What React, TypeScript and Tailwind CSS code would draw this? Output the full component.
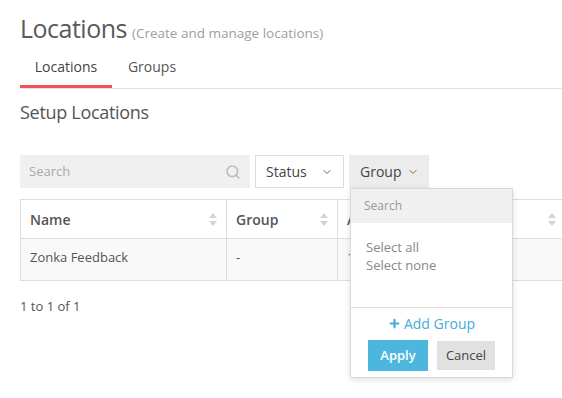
import { Search, ChevronDown, Plus } from "lucide-react";

function SortIcon() {
  return (
    <svg width="8" height="13" viewBox="0 0 8 13" className="shrink-0">
      <path d="M4 0 L8 5 L0 5 Z" fill="#d4d4d4" />
      <path d="M4 13 L8 8 L0 8 Z" fill="#d4d4d4" />
    </svg>
  );
}

function HeaderCell({ label, width }: { label: string; width: string }) {
  return (
    <div className={`${width} flex items-center justify-between border-r border-[#dddddd] px-[9px] last:border-r-0`}>
      <span className="font-semibold text-[14px] text-[#555]">{label}</span>
      <SortIcon />
    </div>
  );
}

export default function App() {
  return (
    <div className="relative w-[562px] h-[398px] overflow-hidden bg-white font-['Open_Sans',sans-serif] text-[#555]">
      <div className="pl-[20px] pt-[11px]">
        {/* title */}
        <div className="flex items-baseline gap-[5px] h-[34px]">
          <h1 className="text-[25px] leading-[34px] text-[#5a5a5a] tracking-[-0.5px]">Locations</h1>
          <span className="text-[13.5px] text-[#a0a0a0]">(Create and manage locations)</span>
        </div>

        {/* tabs */}
        <div className="mt-[7px] flex border-b border-[#e2e2e2]">
          <div className="w-[92px] h-[36px] flex items-start pt-[4px] justify-center border-b-[3px] border-[#ef5059] text-[14px] text-[#444] mb-[-1px]">
            Locations
          </div>
          <div className="w-[80px] h-[36px] flex items-start pt-[4px] justify-center text-[14px] text-[#555]">Groups</div>
        </div>

        <h2 className="mt-[10px] text-[18px] leading-[26px] text-[#555] tracking-[-0.3px]">Setup Locations</h2>

        {/* filters */}
        <div className="mt-[30px] flex gap-[5px] h-[33px]">
          <div className="w-[230px] bg-[#f0f0f0] flex items-center justify-between pl-[9px] pr-[9px]">
            <span className="text-[13px] text-[#aaa]">Search</span>
            <Search size={16} strokeWidth={2.4} className="text-[#bdbdbd]" />
          </div>
          <div className="w-[89px] border border-[#dddddd] flex items-center justify-between pl-[10px] pr-[10px]">
            <span className="text-[14px] text-[#444]">Status</span>
            <ChevronDown size={12} strokeWidth={2} className="text-[#666]" />
          </div>
          <div className="relative w-[80px] bg-[#ececec] flex items-center pl-[11px] gap-[6px]">
            <span className="text-[14px] text-[#444]">Group</span>
            <ChevronDown size={12} strokeWidth={2} className="text-[#666]" />
          </div>
        </div>

        {/* table */}
        <div className="mt-[11px] w-[600px] border border-[#dddddd]">
          <div className="flex h-[39px] border-b border-[#dddddd]">
            <HeaderCell label="Name" width="w-[206px]" />
            <HeaderCell label="Group" width="w-[111px]" />
            <HeaderCell label="Address" width="w-[120px]" />
            <HeaderCell label="Status" width="w-[108px]" />
            <div className="flex-1" />
          </div>
          <div className="flex h-[41px] bg-[#f9f9f9] text-[13px] leading-[18px] text-[#555]">
            <div className="w-[206px] border-r border-[#dddddd] px-[9px] pt-[9px]">Zonka Feedback</div>
            <div className="w-[111px] border-r border-[#dddddd] px-[9px] pt-[9px]">-</div>
            <div className="w-[120px] border-r border-[#dddddd] px-[9px] pt-[9px]">1</div>
            <div className="w-[108px] px-[9px] pt-[9px]">Active</div>
          </div>
        </div>

        <div className="mt-[16px] text-[13px] text-[#555]">1 to 1 of 1</div>
      </div>

      {/* group dropdown */}
      <div className="absolute left-[350px] top-[188px] w-[163px] h-[190px] bg-white border border-[#d9d9d9] shadow-[0_2px_6px_rgba(0,0,0,0.12)] flex flex-col">
        <div className="h-[34px] bg-[#f0f0f0] flex items-center pl-[13px] text-[12px] text-[#999]">Search</div>
        <div className="h-[85px] pt-[15px] pl-[15px] text-[13px] leading-[18px] text-[#888] border-b border-[#dddddd]">
          <div>Select all</div>
          <div>Select none</div>
        </div>
        <div className="flex justify-center items-center gap-[3px] mt-[5px] h-[20px] text-[14px] text-[#46abd9]">
          <Plus size={13} strokeWidth={4} />
          <span>Add Group</span>
        </div>
        <div className="mt-[7px] flex gap-[9px] pl-[17px]">
          <button className="w-[60px] h-[31px] bg-[#4cb6de] text-white text-[13px] font-semibold">Apply</button>
          <button className="w-[58px] h-[29px] mt-[1px] bg-[#e1e1e1] text-[#444] text-[13px]">Cancel</button>
        </div>
      </div>
    </div>
  );
}
